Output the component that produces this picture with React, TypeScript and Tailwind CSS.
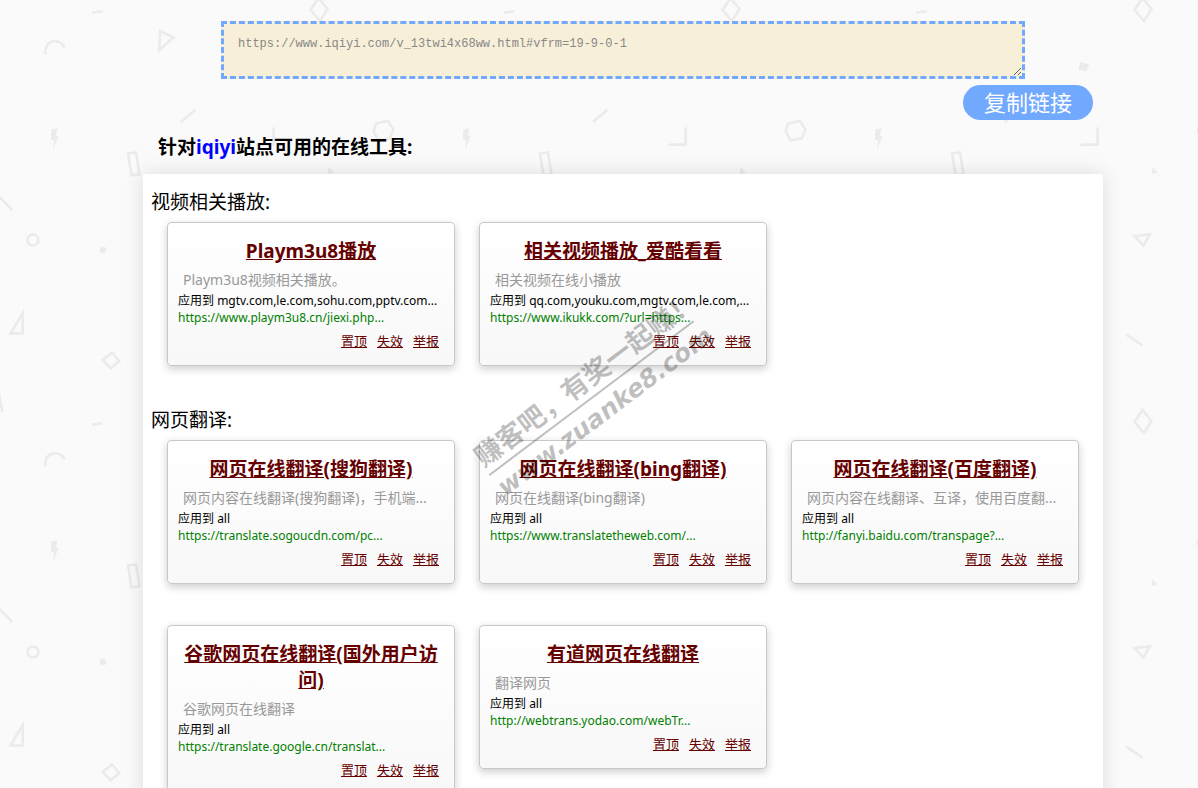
import { useRef, useState } from 'react'

type Tool = {
  title: string
  desc: string
  sites: string
  url: string
}

type Section = {
  name: string
  tools: Tool[]
}

const sections: Section[] = [
  {
    name: '视频相关播放:',
    tools: [
      {
        title: 'Playm3u8播放',
        desc: 'Playm3u8视频相关播放。',
        sites: 'mgtv.com,le.com,sohu.com,pptv.com...',
        url: 'https://www.playm3u8.cn/jiexi.php...',
      },
      {
        title: '相关视频播放_爱酷看看',
        desc: '相关视频在线小播放',
        sites: 'qq.com,youku.com,mgtv.com,le.com,...',
        url: 'https://www.ikukk.com/?url=https...',
      },
    ],
  },
  {
    name: '网页翻译:',
    tools: [
      {
        title: '网页在线翻译(搜狗翻译)',
        desc: '网页内容在线翻译(搜狗翻译)，手机端...',
        sites: 'all',
        url: 'https://translate.sogoucdn.com/pc...',
      },
      {
        title: '网页在线翻译(bing翻译)',
        desc: '网页在线翻译(bing翻译)',
        sites: 'all',
        url: 'https://www.translatetheweb.com/...',
      },
      {
        title: '网页在线翻译(百度翻译)',
        desc: '网页内容在线翻译、互译，使用百度翻...',
        sites: 'all',
        url: 'http://fanyi.baidu.com/transpage?...',
      },
      {
        title: '谷歌网页在线翻译(国外用户访问)',
        desc: '谷歌网页在线翻译',
        sites: 'all',
        url: 'https://translate.google.cn/translat...',
      },
      {
        title: '有道网页在线翻译',
        desc: '翻译网页',
        sites: 'all',
        url: 'http://webtrans.yodao.com/webTr...',
      },
    ],
  },
]

const actions = ['置顶', '失效', '举报']

// Repeating geometric doodles behind the page
function Backdrop() {
  return (
    <svg className="absolute inset-0 h-full w-full" aria-hidden="true">
      <defs>
        <pattern id="doodles" width="412" height="412" patternUnits="userSpaceOnUse">
          <g fill="none" stroke="#ebebeb" strokeWidth="2.6">
            <path d="M92 12.7 102.5 11.3" />
            <path d="M45.800 54.500A9.300 9.300 0 1 1 64.500 47.800" />
            <path d="M160 31 173.5 37.5 159.3 50Z" />
            <path d="M318.500-2 327.500 9 320 21 310.500 10Z" />
            <path d="M318.500 410 327.500 421 320 433 310.500 422Z" />
            <path d="M181 122 195.500 109.500" />
            <path d="M128 153.500 136 152.500 139.500 174.300 131.500 175.300Z" />
            <path d="M376 123.500 388 121 393.500 129.500 389.500 138.500 378.500 140.300 373.700 131Z" />
            <path d="M-4 193.500 12.300 210" />
            <circle cx="33" cy="240" r="5.500" />
            <path d="M22.700 313V333.500H10.500Z" />
            <path d="M112 352.500 119.200 361 110.500 368.500 102.700 360Z" />
            <path d="M-2 388 2.300 412" />
            <path d="M310.500 236 326 234.400 319.300 245.500Z" />
            <path d="M302 334.500 318.500 345.500" />
          </g>
          <g fill="#ebebeb">
            <path d="M51.300 129.500 57.500 128 55.700 135.300 58.500 136 53.500 149.500 53.800 140 51 140Z" />
            <path d="M275 126V146H255L258 143.200H272.200V129Z" />
            <path d="M328.500 167 333.500 172.500 328 174Z" />
            <path d="M256 62 265 64.500 262.500 71.500 254.500 69.500Z" />
            <circle cx="103" cy="250" r="3.200" />
          </g>
        </pattern>
      </defs>
      <rect width="100%" height="100%" fill="url(#doodles)" />
    </svg>
  )
}

function ToolCard({ tool }: { tool: Tool }) {
  return (
    <article className="w-72 rounded border border-[#c8c8c8] bg-linear-to-b from-white to-[#f8f8f8] px-2.5 py-[15px] shadow-[0_3px_8px_rgba(0,0,0,0.2)]">
      <h3 className="text-center text-[19px] leading-[26px] font-bold">
        <a href="#" className="text-[#600] underline">
          {tool.title}
        </a>
      </h3>
      <p className="mt-1.5 truncate px-[5px] text-sm leading-5 text-[#999]">{tool.desc}</p>
      <p className="mt-0.5 text-xs leading-[17px] whitespace-nowrap text-black">应用到 {tool.sites}</p>
      <p className="text-xs leading-[17px] whitespace-nowrap text-[#008000]">{tool.url}</p>
      <div className="mt-1.5 flex justify-end gap-2.5 pr-[5px] text-[13px] leading-[18px]">
        {actions.map((name) => (
          <a key={name} href="#" className="text-[#600] underline">
            {name}
          </a>
        ))}
      </div>
    </article>
  )
}

function Watermark() {
  return (
    <div className="pointer-events-none absolute top-[220px] left-[454px] flex -translate-x-1/2 -translate-y-1/2 -rotate-37 flex-col items-start font-bold whitespace-nowrap text-black/25 select-none">
      <span className="text-[27px] leading-9">赚客吧，有奖一起赚！</span>
      <span className="h-0.5 w-64 bg-black/25" />
      <span className="font-['DejaVu_Sans',sans-serif] text-[25px] leading-9 italic">www.zuanke8.com</span>
    </div>
  )
}

export default function App() {
  const [link, setLink] = useState('https://www.iqiyi.com/v_13twi4x68ww.html#vfrm=19-9-0-1')
  const linkRef = useRef<HTMLTextAreaElement>(null)

  const copyLink = () => {
    linkRef.current?.select()
    document.execCommand('copy')
  }

  return (
    <div className="relative h-screen overflow-hidden bg-[#fafafa] pl-12 font-['Noto_Sans','Noto_Sans_CJK_SC',sans-serif] text-black">
      <Backdrop />
      <div className="relative mx-auto max-w-[960px] pt-[21px]">
        <textarea
          ref={linkRef}
          value={link}
          onChange={(e) => setLink(e.target.value)}
          aria-label="链接"
          className="mx-auto block h-[58px] w-[804px] max-w-full resize border-[3px] border-dashed border-[#71a9ff] bg-[#f8efd9] px-3.5 py-3 font-['Liberation_Mono',monospace] text-xs leading-4 text-[#888] outline-none"
        />
        <div className="mt-1.5 flex justify-end pr-2.5">
          <button onClick={copyLink} className="h-[35px] w-[130px] rounded-full bg-[#71a9ff] text-[22px] leading-[35px] text-white">
            复制链接
          </button>
        </div>
        <h2 className="mt-3.5 px-[15px] text-[19px] leading-[26px] font-bold">
          针对<span className="text-[#00f]">iqiyi</span>站点可用的在线工具:
        </h2>

        <main className="relative mt-3.5 rounded-xs bg-white pt-[15px] shadow-[0_0_20px_rgba(0,0,0,0.12)]">
          {sections.map((section) => (
            <section key={section.name}>
              <h3 className="px-2 text-[19px] leading-[26px]">{section.name}</h3>
              <div className="mt-[7px] flex flex-wrap items-start gap-x-6 gap-y-[41px] px-6 pb-[41px]">
                {section.tools.map((tool) => (
                  <ToolCard key={tool.title} tool={tool} />
                ))}
              </div>
            </section>
          ))}
          <Watermark />
        </main>
      </div>
    </div>
  )
}
